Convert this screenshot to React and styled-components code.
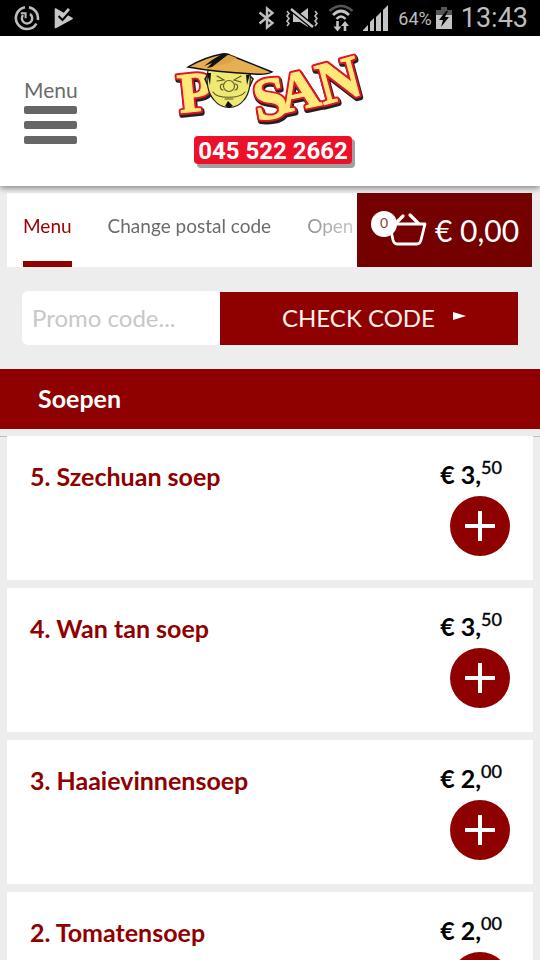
import React from 'react';
import styled, { createGlobalStyle } from 'styled-components';

const GlobalStyle = createGlobalStyle`
  * {
    box-sizing: border-box;
  }

  body {
    margin: 0;
    background-color: #ededed;
    font-family: Lato, 'Noto Sans', sans-serif;
  }

  button,
  input {
    border: none;
    font-family: inherit;
  }
`;

const Screen = styled.div`
  display: flex;
  flex-direction: column;
  height: 100vh;
  overflow: hidden;
`;

const StatusBar = styled.div`
  display: flex;
  flex-shrink: 0;
  justify-content: space-between;
  align-items: center;
  height: 36px;
  padding: 0 12px 0 14px;
  background-color: black;
  color: #bdbdbd;
  font-family: Roboto, sans-serif;
`;

const StatusGroup = styled.div`
  display: flex;
  align-items: center;
  gap: ${(props) => props.$gap};
`;

const Battery = styled.div`
  display: flex;
  align-items: center;
  gap: 4px;
  font-size: 18px;
`;

const Clock = styled.span`
  font-size: 27px;
  line-height: 40px;
`;

const Header = styled.header`
  position: relative;
  display: grid;
  flex-shrink: 0;
  grid-template-columns: 1fr auto 1fr;
  align-items: center;
  height: 150px;
  padding: 0 24px;
  background-color: white;
  box-shadow: 0 2px 6px rgba(0, 0, 0, 0.45);
`;

const MenuButton = styled.button`
  display: flex;
  flex-direction: column;
  gap: 7px;
  width: 53px;
  padding: 0;
  background: none;
  color: #6b6b6b;
  font-size: 21px;
  line-height: 24px;
`;

const MenuLine = styled.span`
  width: 100%;
  height: 8px;
  border-radius: 2px;
  background-color: #666;
`;

const MenuLabel = styled.span`
  margin-bottom: -3px;
`;

const Content = styled.main`
  flex: 1;
  overflow-y: auto;
  scrollbar-width: none;
`;

const NavRow = styled.div`
  display: flex;
  height: 74px;
  margin: 7px 8px 0 7px;
  background-color: white;
`;

const Tabs = styled.nav`
  display: flex;
  flex: 1;
  gap: 36px;
  min-width: 0;
  padding-left: 16px;
  overflow: hidden;
  mask-image: linear-gradient(to left, rgba(0, 0, 0, 0.3), black 80px);
`;

const Tab = styled.a`
  flex-shrink: 0;
  padding-bottom: 2px;
  border-bottom: 6px solid ${(props) => (props.$active ? '#8f0000' : 'transparent')};
  color: ${(props) => (props.$active ? '#a00000' : '#6b6b6b')};
  font-size: 19px;
  line-height: 66px;
  text-decoration: none;
  white-space: nowrap;
`;

const Cart = styled.button`
  display: flex;
  flex-shrink: 0;
  align-items: center;
  gap: 8px;
  width: 175px;
  padding: 0 0 0 13px;
  background-color: #750000;
  color: white;
  font-size: 30px;
`;

const PromoForm = styled.form`
  display: flex;
  align-items: flex-end;
  margin: 24px 22px;
`;

const PromoInput = styled.input`
  width: 198px;
  height: 54px;
  padding: 0 10px 2px;
  border-radius: 6px;
  background-color: white;
  font-size: 24px;

  &::placeholder {
    color: #c8c8c8;
  }
`;

const PromoButton = styled.button`
  display: flex;
  flex: 1;
  justify-content: center;
  align-items: center;
  gap: 18px;
  height: 53px;
  padding: 0 0 2px 10px;
  background-color: #8f0000;
  color: #fff2e8;
  font-size: 24px;
`;

const PromoArrow = styled.svg`
  margin-bottom: 4px;
`;

const SectionTitle = styled.h2`
  margin: 0;
  padding: 0 38px 2px;
  background-color: #8f0000;
  color: white;
  font-size: 25px;
  line-height: 58px;
`;

const ItemList = styled.ul`
  display: flex;
  flex-direction: column;
  gap: 8px;
  margin: 7px 0 0;
  padding: 0 7px;
  border-top: 1px solid #bdbdbd;
  list-style: none;
`;

const Item = styled.li`
  display: flex;
  justify-content: space-between;
  height: 144px;
  padding: 22px 23px;
  background-color: white;

  &:first-child {
    margin-top: -1px;
  }
`;

const ItemName = styled.h3`
  margin: 3px 0 0;
  color: #8f0000;
  font-size: 25px;
  line-height: 30px;
`;

const ItemAside = styled.div`
  display: flex;
  flex-direction: column;
  align-items: flex-end;
  gap: 6px;
`;

const Price = styled.div`
  display: flex;
  align-items: flex-start;
  margin-right: 8px;
  color: black;
  font-size: 25px;
  font-weight: bold;
  line-height: 32px;
`;

const Cents = styled.span`
  font-size: 18px;
  font-weight: normal;
  line-height: 18px;
  -webkit-text-stroke: 0.4px black;
`;

const AddButton = styled.button`
  display: flex;
  justify-content: center;
  align-items: center;
  width: 60px;
  height: 60px;
  padding: 0;
  border-radius: 50%;
  background-color: #8f0000;
`;

const items = [
  { name: '5. Szechuan soep', euros: '3', cents: '50' },
  { name: '4. Wan tan soep', euros: '3', cents: '50' },
  { name: '3. Haaievinnensoep', euros: '2', cents: '00' },
  { name: '2. Tomatensoep', euros: '2', cents: '00' },
];

function SyncIcon() {
  return (
    <svg width="26" height="26" viewBox="0 0 26 26" fill="none" stroke="#bdbdbd">
      <path d="M15 2.2A11 11 0 0 1 23.8 15M22.4 18.6A11 11 0 1 1 11 2.2" strokeWidth="2.6" />
      <path d="M16 9a5.2 5.2 0 1 1-7 1" strokeWidth="2.4" />
      <path d="M6.8 8.2h4.8v5" strokeWidth="2" />
    </svg>
  );
}

function PlayCheckIcon() {
  return (
    <svg width="20" height="22" viewBox="0 0 20 22">
      <path d="M1.5 2L18 11.5 1.5 20.5z" fill="#c6c6c6" stroke="#c6c6c6" strokeWidth="1.6" strokeLinejoin="round" />
      <path d="M9 9L15 2" fill="none" stroke="#c6c6c6" strokeWidth="3" />
      <path d="M4.5 9l4 4L17.5 3" fill="none" stroke="black" strokeWidth="2" />
    </svg>
  );
}

function BluetoothIcon() {
  return (
    <svg width="18" height="24" viewBox="0 0 18 24" fill="none" stroke="#bdbdbd" strokeWidth="2.4">
      <path d="M1.5 6.5l13 10.5L9 21.5v-19L14.5 7l-13 10.5" />
    </svg>
  );
}

function MutedIcon() {
  return (
    <svg width="34" height="24" viewBox="0 0 34 24">
      <path d="M8 8h7l8-6v19l-8-5H8z" fill="#c4c4c4" />
      <path d="M6 3l22 18" stroke="black" strokeWidth="5" />
      <path d="M6 3l22 18" stroke="#c4c4c4" strokeWidth="2.4" />
      <path
        d="M2 5l2 2.5L2 10l2 2.5L2 15l2 2.5L2 20M30 5l2 2.5-2 2.5 2 2.5-2 2.5 2 2.5-2 2.5"
        fill="none"
        stroke="#bdbdbd"
        strokeWidth="1.6"
      />
    </svg>
  );
}

function WifiIcon() {
  return (
    <svg width="26" height="28" viewBox="0 0 26 28" fill="none" stroke="#c4c4c4" strokeWidth="2.6">
      <path d="M1.5 7Q13-3 24.5 7" stroke="#555" />
      <path d="M5 11Q13 3 21 11M8.5 15Q13 10 17.5 15" />
      <path d="M9.5 17v7M17 27v-6" />
      <path d="M5.5 22.5h8l-4 5zM13 22h8l-4-5z" fill="#c4c4c4" stroke="none" />
    </svg>
  );
}

function SignalIcon() {
  return (
    <svg width="26" height="26" viewBox="0 0 26 26" fill="#c4c4c4">
      <path d="M0 26v-1l5-5v6zM7 26v-9l4-4v13zM13 26V12l5-5v19zM20 26V5l5-5v26z" />
    </svg>
  );
}

function BatteryIcon() {
  return (
    <svg width="16" height="24" viewBox="0 0 16 24">
      <path d="M5 1h6v3h5v7H0V4h5z" fill="#555" />
      <path d="M0 9h16v14H0z" fill="#c4c4c4" />
      <path d="M10 5L3 14h4l-2 7 8-10H9l3-6z" fill="black" />
    </svg>
  );
}

function LogoLetters(props) {
  return (
    <g
      fontFamily="'Liberation Serif', serif"
      fontWeight="bold"
      fill={props.fill}
      stroke={props.stroke}
      strokeWidth={props.strokeWidth}
      strokeLinejoin="round"
    >
      <text fontSize="57" transform="translate(15 67) rotate(-6)">P</text>
      <text fontSize="60" transform="translate(92 75) rotate(-10)">S</text>
      <text fontSize="56" transform="translate(118 67) rotate(-12)">A</text>
      <text fontSize="60" transform="translate(158 59) rotate(-15)">N</text>
    </g>
  );
}

function Logo() {
  return (
    <svg width="210" height="130" viewBox="0 0 210 130" role="img" aria-label="Posan 045 522 2662">
      <g transform="translate(1 2)">
        <LogoLetters fill="#222" stroke="#222" strokeWidth="6" />
      </g>
      <LogoLetters fill="#e01428" stroke="#e01428" strokeWidth="5" />
      <LogoLetters fill="#ffe97a" stroke="#ffe97a" strokeWidth="1" />

      <path d="M43 28l-3 5 5 11M83 28l5 5-5 11" fill="#e9e070" stroke="#222" strokeWidth="1.6" />
      <path d="M43 24c-2 12-1 22 6 30 8 10 22 10 30 0 6-7 7-18 6-30z" fill="#efe873" stroke="#222" strokeWidth="1.2" />
      <path d="M42 27l3 12 1-12zM85 28l-3 11-1-10z" fill="#111" />
      <g fill="none" stroke="#5c5828" strokeWidth="1.1" strokeLinecap="round">
        <path d="M52 30l7 4-7 1M76 30l-7 4 7 2" />
        <circle cx="64" cy="40" r="5.5" />
        <path d="M58 38c-4 0-3 6 0 6M70 38c4 0 3 6 0 6M48 46c4 7 27 7 32 0M60 53h8" />
      </g>
      <path d="M60 60l3-5 5 5-4 2z" fill="#111" />
      <path d="M23 21Q40 11 57 8q5-1 10 2l40 16q-5 3-18 2Q50 26 23 21z" fill="#e6b052" stroke="#111" strokeWidth="1.4" />
      <path d="M64 9L46 21l18-4 8-5z" fill="#dca447" />
      <path d="M57 8h7L47 21l-5 1 5-5-8 3 8-6z" fill="#111" />

      <rect x="32" y="93" width="158" height="29" rx="4" fill="#777" opacity="0.7" />
      <rect x="29" y="90" width="158" height="28" rx="4" fill="#ec1028" />
      <text
        x="108"
        y="113"
        textAnchor="middle"
        fontFamily="Roboto, sans-serif"
        fontWeight="bold"
        fontSize="24"
        fill="white"
      >
        045 522 2662
      </text>
    </svg>
  );
}

function BasketIcon(props) {
  return (
    <svg width="57" height="38" viewBox="0 0 57 38">
      <g fill="none" stroke="white" strokeWidth="2.8" strokeLinecap="round" strokeLinejoin="round">
        <path d="M22 13h33l-4 16q-1 4-4 4H27q-3 0-4-4l-3-14" />
        <path d="M27 11l6-6M40 4l8 8" strokeWidth="3.2" />
      </g>
      <circle cx="14" cy="13" r="13" fill="white" />
      <text x="14" y="17" textAnchor="middle" fontSize="14" fill="#8a3c34">
        {props.count}
      </text>
    </svg>
  );
}

function MenuItem(props) {
  return (
    <Item>
      <ItemName>{props.name}</ItemName>
      <ItemAside>
        <Price>
          € {props.euros},<Cents>{props.cents}</Cents>
        </Price>
        <AddButton type="button" aria-label={`Add ${props.name}`}>
          <svg width="30" height="30" viewBox="0 0 30 30">
            <path d="M15 0v30M0 15h30" stroke="white" strokeWidth="4" />
          </svg>
        </AddButton>
      </ItemAside>
    </Item>
  );
}

function App() {
  return (
    <Screen>
      <GlobalStyle />
      <StatusBar>
        <StatusGroup $gap="14px">
          <SyncIcon />
          <PlayCheckIcon />
        </StatusGroup>
        <StatusGroup $gap="9px">
          <BluetoothIcon />
          <MutedIcon />
          <WifiIcon />
          <SignalIcon />
          <Battery>
            64%
            <BatteryIcon />
          </Battery>
          <Clock>13:43</Clock>
        </StatusGroup>
      </StatusBar>
      <Header>
        <MenuButton type="button">
          <MenuLabel>Menu</MenuLabel>
          <MenuLine />
          <MenuLine />
          <MenuLine />
        </MenuButton>
        <Logo />
      </Header>
      <Content>
        <NavRow>
          <Tabs>
            <Tab href="#menu" $active>
              Menu
            </Tab>
            <Tab href="#postal-code">Change postal code</Tab>
            <Tab href="#opening">Open</Tab>
          </Tabs>
          <Cart type="button">
            <BasketIcon count={0} />
            <span>€ 0,00</span>
          </Cart>
        </NavRow>
        <PromoForm onSubmit={(event) => event.preventDefault()}>
          <PromoInput type="text" placeholder="Promo code..." aria-label="Promo code" />
          <PromoButton type="submit">
            CHECK CODE
            <PromoArrow width="13" height="8" viewBox="0 0 13 8">
              <path d="M0 0l13 4L0 8z" fill="white" />
            </PromoArrow>
          </PromoButton>
        </PromoForm>
        <SectionTitle>Soepen</SectionTitle>
        <ItemList>
          {items.map((item) => (
            <MenuItem key={item.name} {...item} />
          ))}
        </ItemList>
      </Content>
    </Screen>
  );
}

export default App;
